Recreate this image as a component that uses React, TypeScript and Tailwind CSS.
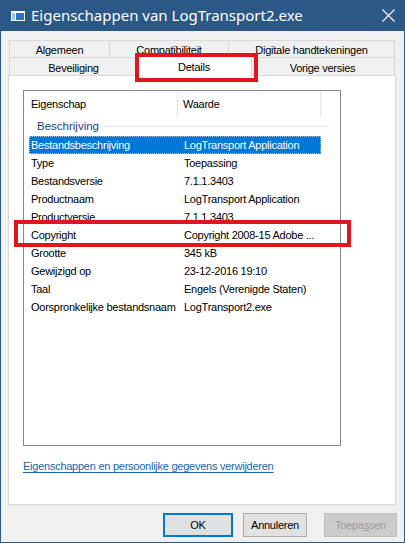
import React from "react";

const rows: [string, string][] = [
  ["Bestandsbeschrijving", "LogTransport Application"],
  ["Type", "Toepassing"],
  ["Bestandsversie", "7.1.1.3403"],
  ["Productnaam", "LogTransport Application"],
  ["Productversie", "7.1.1.3403"],
  ["Copyright", "Copyright 2008-15 Adobe ..."],
  ["Grootte", "345 kB"],
  ["Gewijzigd op", "23-12-2016 19:10"],
  ["Taal", "Engels (Verenigde Staten)"],
  ["Oorspronkelijke bestandsnaam", "LogTransport2.exe"],
];

const font = { fontFamily: '"Liberation Sans", Arial, sans-serif' };

export default function App() {
  return (
    <div
      className="relative w-[405px] h-[543px] flex flex-col bg-[#f0f0f0] border-x border-b border-[#2b5886] text-[11px] tracking-[-0.25px] text-black overflow-hidden"
      style={font}
    >
      {/* Title bar */}
      <div className="h-[31px] shrink-0 bg-[#2b5886] flex items-center text-white -mx-px">
        <svg width="14" height="10" viewBox="0 0 14 10" className="ml-[11px]">
          <rect x="0" y="0" width="14" height="10" fill="#ffffff" />
          <rect x="1" y="2" width="3" height="7" fill="#9fc6ec" />
          <rect x="5" y="2" width="8" height="7" fill="#2f72c4" />
        </svg>
        <span className="ml-[6px] text-[15px] tracking-normal leading-none" style={{ fontFamily: '"Noto Sans", sans-serif' }}>
          Eigenschappen van LogTransport2.exe
        </span>
        <div className="flex-1" />
        <svg width="13" height="13" viewBox="0 0 13 13" className="mr-[10px]">
          <path d="M0.5 0.5 L12.5 12.5 M12.5 0.5 L0.5 12.5" stroke="#ffffff" strokeWidth="1.1" />
        </svg>
      </div>

      {/* Tabs */}
      <div className="mt-[9px] ml-[8px] mr-[9px] flex flex-col">
        <div className="flex h-[17px]">
          <div className="w-[100px] border-t border-l border-[#d9d9d9] flex items-center justify-center pt-[3px]">Algemeen</div>
          <div className="w-[119px] border-t border-l border-[#d9d9d9] flex items-center justify-center pt-[3px]">Compatibiliteit</div>
          <div className="w-[167px] border-t border-l border-r border-[#d9d9d9] flex items-center justify-center pt-[3px]">Digitale handtekeningen</div>
        </div>
        <div className="flex h-[18px]">
          <div className="w-[128px] border-t border-l border-[#d9d9d9] flex items-center justify-center pt-[3px]">Beveiliging</div>
          <div className="relative w-[113px] border-t border-l border-[#d9d9d9]">
            <div className="absolute -left-[2px] -right-[2px] -top-[2px] -bottom-[1px] bg-white border-t border-l border-r border-[#d9d9d9] z-10 flex justify-center pt-[2px]">
              Details
            </div>
          </div>
          <div className="w-[145px] border-t border-l border-r border-[#d9d9d9] flex items-center justify-center pt-[3px]">Vorige versies</div>
        </div>
      </div>

      {/* Panel */}
      <div className="ml-[7px] mr-[8px] h-[430px] bg-white border border-[#d9d9d9] flex flex-col">
        <div className="mt-[14px] ml-[14px] w-[318px] h-[356px] border border-[#828790] flex flex-col">
          {/* header */}
          <div className="h-[25px] flex shrink-0">
            <div className="w-[154px] border-r border-[#e5e5e5] pl-[7px] pt-[1px] flex items-center">Eigenschap</div>
            <div className="w-[143px] border-r border-[#e5e5e5] pl-[5px] pt-[1px] flex items-center">Waarde</div>
          </div>
          {/* group */}
          <div className="h-[20px] flex items-center pl-[13px] pr-[11px] pt-[1px]">
            <span className="text-[#1e3b8c] text-[11.5px] tracking-normal">Beschrijving</span>
            <div className="flex-1 ml-[5px] h-px bg-[#e2e6ee]" />
          </div>
          {rows.map(([k, v], i) => (
            <div key={k} className="h-[18px] flex pl-[5px]">
              <div
                className={
                  "flex w-[292px] items-center pt-[1px] " +
                  (i === 0 ? "bg-[#0078d7] text-white outline outline-1 outline-dotted outline-[#9cc7ee] -outline-offset-1" : "")
                }
              >
                <div className="w-[149px] pl-[2px] whitespace-nowrap">{k}</div>
                <div className="pl-[6px] whitespace-nowrap">{v}</div>
              </div>
            </div>
          ))}
        </div>
        <div className="mt-[12px] ml-[14px]">
          <span className="text-[#1a64ad] underline underline-offset-2">Eigenschappen en persoonlijke gegevens verwijderen</span>
        </div>
      </div>

      {/* Buttons */}
      <div className="mt-[8px] flex justify-end mr-[7px]">
        <button className="w-[70px] h-[24px] bg-[#e1e1e1] border-2 border-[#0078d7]">OK</button>
        <button className="ml-[10px] w-[64px] h-[24px] bg-[#e1e1e1] border border-[#adadad]">Annuleren</button>
        <button className="ml-[17px] w-[73px] h-[24px] bg-[#cccccc] border border-[#bfbfbf] text-[#9a9a9a]">
          Toepa<span className="underline">s</span>sen
        </button>
      </div>

      {/* Red annotation boxes */}
      <div className="absolute left-[134px] top-[53px] w-[123px] h-[29px] border-4 border-[#e3141f] z-20 pointer-events-none" />
      <div className="absolute left-[13px] top-[220px] w-[337px] h-[27px] border-4 border-[#e3141f] z-20 pointer-events-none" />
    </div>
  );
}
